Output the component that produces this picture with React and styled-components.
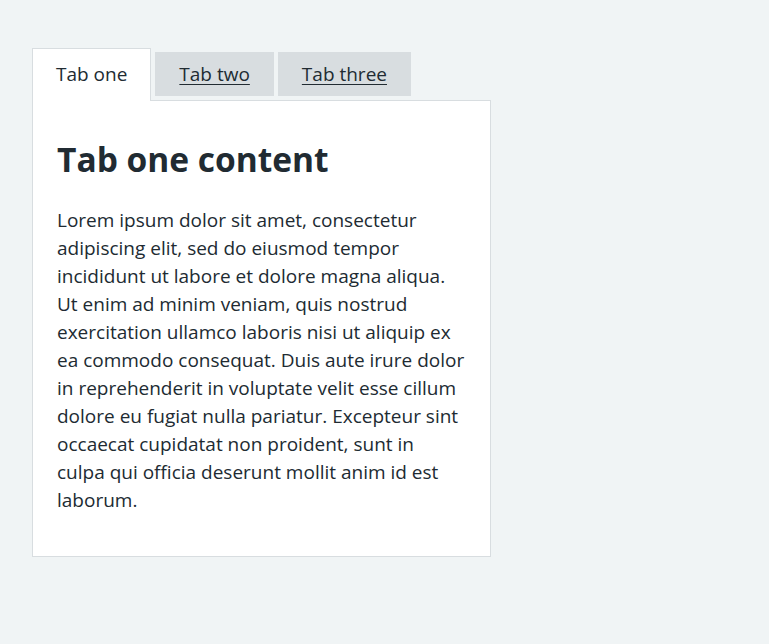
import { createGlobalStyle, styled } from "styled-components";

const GlobalStyle = createGlobalStyle`
    body {
        margin: 0;
        background-color: #f0f4f5;
        color: #212b32;
        font-family: "Open Sans", "Noto Sans", Arial, sans-serif;
    }
`;

const Page = styled.div`
    padding: 52px 32px 40px;
`;

const TabList = styled.ul`
    display: flex;
    align-items: flex-start;
    list-style: none;
    margin: 0;
    padding: 0;
`;

const Tab = styled.li`
    position: relative;
    margin-right: 4px;
    margin-bottom: ${(props) => (props.$selected ? "-1px" : "4px")};
    margin-top: ${(props) => (props.$selected ? "-4px" : "0")};
    padding: ${(props) => (props.$selected ? "13px 23px 15px" : "10px 24px")};
    background-color: ${(props) => (props.$selected ? "#ffffff" : "#d8dde0")};
    border: ${(props) => (props.$selected ? "1px solid #d8dde0" : "none")};
    border-bottom: none;
    font-size: 19px;
    line-height: 24px;
    z-index: 1;
`;

const TabLink = styled.a`
    color: #212b32;
    text-decoration: ${(props) => (props.$selected ? "none" : "underline")};
    text-underline-offset: 3px;
    text-decoration-thickness: 1px;
`;

const Panel = styled.section`
    width: 459px;
    box-sizing: border-box;
    padding: 38px 24px 42px;
    background-color: #ffffff;
    border: 1px solid #d8dde0;
`;

const Heading = styled.h2`
    margin: 0 0 27px;
    font-size: 33.5px;
    line-height: 40px;
    font-weight: 700;
`;

const Body = styled.p`
    margin: 0;
    font-size: 19px;
    line-height: 28px;
`;

const Line = styled.span`
    display: block;
    white-space: nowrap;
`;

const tabs = ["Tab one", "Tab two", "Tab three"];

const lines = [
    "Lorem ipsum dolor sit amet, consectetur",
    "adipiscing elit, sed do eiusmod tempor",
    "incididunt ut labore et dolore magna aliqua.",
    "Ut enim ad minim veniam, quis nostrud",
    "exercitation ullamco laboris nisi ut aliquip ex",
    "ea commodo consequat. Duis aute irure dolor",
    "in reprehenderit in voluptate velit esse cillum",
    "dolore eu fugiat nulla pariatur. Excepteur sint",
    "occaecat cupidatat non proident, sunt in",
    "culpa qui officia deserunt mollit anim id est",
    "laborum.",
];

export default function App() {
    return (
        <>
            <GlobalStyle />
            <Page>
                <TabList>
                    {tabs.map((tab, i) => (
                        <Tab key={tab} $selected={i === 0}>
                            <TabLink href="#" $selected={i === 0}>
                                {tab}
                            </TabLink>
                        </Tab>
                    ))}
                </TabList>
                <Panel>
                    <Heading>Tab one content</Heading>
                    <Body>
                        {lines.map((line) => (
                            <Line key={line}>{line}</Line>
                        ))}
                    </Body>
                </Panel>
            </Page>
        </>
    );
}
